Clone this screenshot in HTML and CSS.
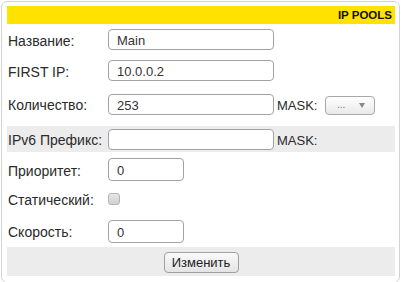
FILE: index.html
```html
<!DOCTYPE html>
<html>
<head>
<meta charset="utf-8">
<link rel="stylesheet" href="styles.css">
</head>
<body>
<div class="panel">
  <div class="head">IP POOLS</div>
  <div class="row r1"><span class="lbl">Название:</span><input class="inp wide" value="Main"></div>
  <div class="row r2"><span class="lbl">FIRST IP:</span><input class="inp wide" value="10.0.0.2"></div>
  <div class="row r3"><span class="lbl">Количество:</span><input class="inp wide" value="253"><span class="mask">MASK:</span><span class="sel"><span class="dots">...</span><span class="arr"></span></span></div>
  <div class="row r4 gray"><span class="lbl">IPv6 Префикс:</span><input class="inp wide" value=""><span class="mask">MASK:</span></div>
  <div class="row r5"><span class="lbl">Приоритет:</span><input class="inp small" value="0"></div>
  <div class="row r6"><span class="lbl">Статический:</span><span class="chk"></span></div>
  <div class="row r7"><span class="lbl">Скорость:</span><input class="inp small" value="0"></div>
  <div class="row r8 gray"><button class="btn">Изменить</button></div>
</div>
</body>
</html>
```
FILE: styles.css
```css
* { box-sizing: border-box; }
body {
  margin: 0;
  background: #fff;
  font-family: "Liberation Sans", Arial, sans-serif;
  color: #222;
}
.panel {
  margin: 1px 0 0 1px;
  width: 399px;
  height: 282px;
  border: 1px solid #d4d4d4;
  border-radius: 6px;
  padding: 4px 4px 0 5px;
}
.head {
  height: 18px;
  background: #ffe200;
  font-weight: bold;
  font-size: 11.5px;
  line-height: 18px;
  text-align: right;
  padding-right: 3px;
  color: #111;
}
.row {
  display: flex;
  align-items: center;
}
.gray { background: #ececec; }
.r1 { height: 31px; }
.r2 { height: 31px; }
.r3 { height: 36px; }
.r4 { height: 26px; margin-top: 4px; }
.r5 { height: 35px; }
.r6 { height: 24px; }
.r7 { height: 32px; margin-top: 4px; }
.r8 { height: 29px; justify-content: center; }
.lbl {
  width: 101px;
  padding-left: 1px;
  font-size: 14px;
  flex: none;
  color: #2a2a2a;
  padding-top: 2px;
}
.inp {
  height: 21px;
  border: 1px solid #a2a2a2;
  border-radius: 4px;
  padding: 2px 0 0 8px;
  font-family: "Liberation Sans", Arial, sans-serif;
  font-size: 13px;
  color: #333;
  background: #fff;
  outline: none;
  margin: 0;
}
.wide { width: 166px; }
.small { width: 76px; height: 23px; }
.mask {
  font-size: 13px;
  margin-left: 3px;
  width: 48px;
  padding-top: 2px;
  color: #2a2a2a;
}
.sel {
  width: 50px;
  height: 19px;
  border: 1px solid #a8a8a8;
  border-radius: 4px;
  background: linear-gradient(#ffffff, #e9e9e9);
  display: flex;
  align-items: center;
  margin-top: 2px;
}
.dots {
  font-size: 10px;
  color: #777;
  margin-left: 11px;
  line-height: 10px;
}
.arr {
  width: 0;
  height: 0;
  border-left: 3px solid transparent;
  border-right: 3px solid transparent;
  border-top: 5px solid #888;
  margin-left: 14px;
}
.chk {
  width: 12px;
  height: 12px;
  border: 1px solid #b4b4b4;
  border-radius: 3px;
  background: linear-gradient(#e6e6e6, #d2d2d2);
}
.btn {
  width: 75px;
  height: 21px;
  border: 1px solid #a0a0a0;
  border-radius: 4px;
  background: linear-gradient(#fafafa, #e4e4e4);
  font-family: "Liberation Sans", Arial, sans-serif;
  font-size: 13px;
  color: #222;
  padding: 0;
  margin-top: 1px;
}
```
